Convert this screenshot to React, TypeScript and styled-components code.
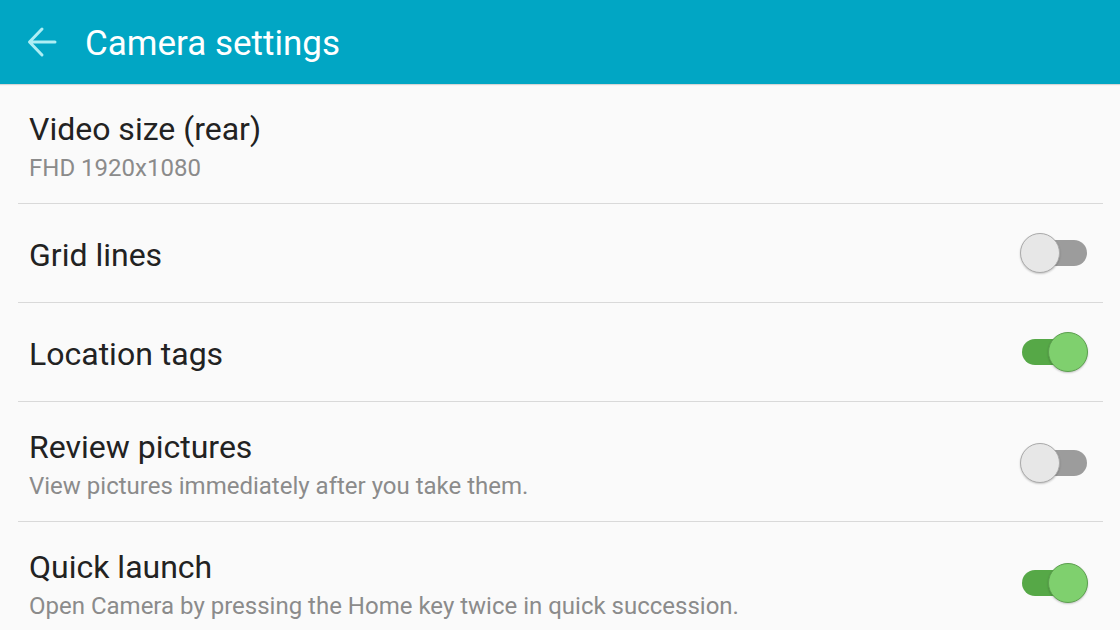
import styled, { createGlobalStyle } from 'styled-components';

const GlobalStyle = createGlobalStyle`
  html, body {
    margin: 0;
    padding: 0;
    background: #fafafa;
    font-family: Roboto, "Noto Sans", "Liberation Sans", sans-serif;
    overflow: hidden;
  }
`;

interface Setting {
  title: string;
  summary?: string;
  checked?: boolean;
}

const settings: Setting[] = [
  { title: 'Video size (rear)', summary: 'FHD 1920x1080' },
  { title: 'Grid lines', checked: false },
  { title: 'Location tags', checked: true },
  {
    title: 'Review pictures',
    summary: 'View pictures immediately after you take them.',
    checked: false,
  },
  {
    title: 'Quick launch',
    summary: 'Open Camera by pressing the Home key twice in quick succession.',
    checked: true,
  },
];

function BackArrow() {
  return (
    <svg width='30' height='32' viewBox='0 0 30 32' fill='none'>
      <path
        d='M28 16H3M15 3L2.5 16L15 29'
        stroke='#aeeef4'
        strokeWidth='3'
        strokeLinecap='round'
        strokeLinejoin='round'
      />
    </svg>
  );
}

function Switch({ on }: { on: boolean }) {
  return (
    <SwitchBox>
      <Track $on={on} />
      <Knob $on={on} />
    </SwitchBox>
  );
}

export default function App() {
  return (
    <>
      <GlobalStyle />
      <Screen>
        <AppBar>
          <BackButton>
            <BackArrow />
          </BackButton>
          <Title>Camera settings</Title>
        </AppBar>
        <List>
          {settings.map((s) => (
            <Row key={s.title} $tall={!!s.summary}>
              <Texts>
                <RowTitle>{s.title}</RowTitle>
                {s.summary && <Summary>{s.summary}</Summary>}
              </Texts>
              {s.checked !== undefined && <Switch on={s.checked} />}
            </Row>
          ))}
        </List>
      </Screen>
    </>
  );
}

const Screen = styled.div`
  width: 1120px;
  height: 630px;
  background: #fafafa;
  overflow: hidden;
`;

const AppBar = styled.header`
  height: 84px;
  background: #01a6c4;
  display: flex;
  align-items: center;
  padding-left: 27px;
  box-shadow: 0 1px 1px rgba(0, 0, 0, 0.14);
  position: relative;
`;

const BackButton = styled.div`
  width: 30px;
  height: 32px;
  display: flex;
  margin-right: 28px;
`;

const Title = styled.h1`
  margin: 3px 0 0;
  font-size: 35px;
  font-weight: 400;
  color: #ffffff;
  line-height: 41px;
`;

const List = styled.div`
  margin: 0 17px 0 18px;
`;

const Row = styled.div<{ $tall: boolean }>`
  display: flex;
  align-items: center;
  justify-content: space-between;
  padding: ${(p) => (p.$tall ? '27px 15px 20px 11px' : '33px 15px 29px 11px')};
  border-bottom: 1px solid #d9d9d9;
`;

const Texts = styled.div`
  display: flex;
  flex-direction: column;
  gap: 6px;
`;

const RowTitle = styled.div`
  font-size: 32px;
  line-height: 36px;
  color: #222222;
`;

const Summary = styled.div`
  font-size: 24px;
  line-height: 30px;
  color: #8b8b8b;
`;

const SwitchBox = styled.div`
  position: relative;
  width: 68px;
  height: 40px;
  margin: -6px 0 -2px;
  flex-shrink: 0;
`;

const Track = styled.div<{ $on: boolean }>`
  position: absolute;
  left: 2px;
  right: 1px;
  top: 7px;
  height: 26px;
  border-radius: 13px;
  background: ${(p) => (p.$on ? '#56a847' : '#9c9c9c')};
`;

const Knob = styled.div<{ $on: boolean }>`
  position: absolute;
  top: 0;
  left: ${(p) => (p.$on ? '28px' : '0')};
  width: 38px;
  height: 38px;
  border-radius: 50%;
  background: ${(p) => (p.$on ? '#7fd06e' : '#e7e7e7')};
  border: 1px solid ${(p) => (p.$on ? '#5c9f4f' : '#aaaaaa')};
  box-shadow: 0 1px 2px rgba(0, 0, 0, 0.2);
`;
